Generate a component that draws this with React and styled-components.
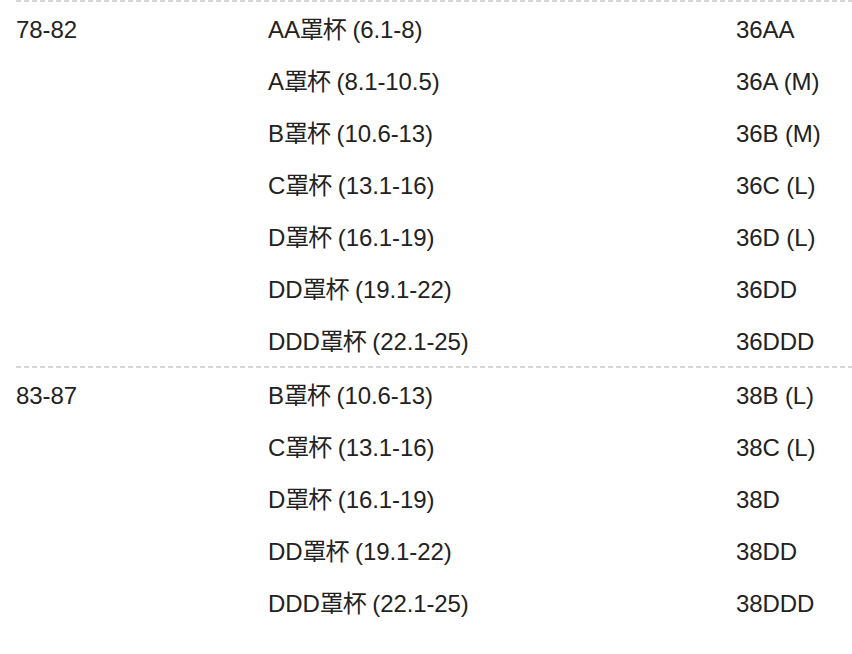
import React from 'react';
import styled, { createGlobalStyle } from 'styled-components';

const GlobalStyle = createGlobalStyle`
  html, body {
    margin: 0;
    padding: 0;
    background: #ffffff;
    overflow: hidden;
  }
  body {
    font-family: "Liberation Sans", "Noto Sans CJK SC", sans-serif;
    color: #222222;
  }
`;

const sizes = [
  {
    band: '78-82',
    rows: [
      ['AA罩杯 (6.1-8)', '36AA'],
      ['A罩杯 (8.1-10.5)', '36A (M)'],
      ['B罩杯 (10.6-13)', '36B (M)'],
      ['C罩杯 (13.1-16)', '36C (L)'],
      ['D罩杯 (16.1-19)', '36D (L)'],
      ['DD罩杯 (19.1-22)', '36DD'],
      ['DDD罩杯 (22.1-25)', '36DDD'],
    ],
  },
  {
    band: '83-87',
    rows: [
      ['B罩杯 (10.6-13)', '38B (L)'],
      ['C罩杯 (13.1-16)', '38C (L)'],
      ['D罩杯 (16.1-19)', '38D'],
      ['DD罩杯 (19.1-22)', '38DD'],
      ['DDD罩杯 (22.1-25)', '38DDD'],
    ],
  },
];

const Table = styled.div`
  margin-left: 16px;
  width: calc(100% - 16px);
`;

// dashed rule drawn as a gradient so the dash length matches
const Group = styled.div`
  display: grid;
  grid-template-columns: 252px 1fr;
  padding-top: 2px;
  background: repeating-linear-gradient(
      to right,
      #d6d6d6 0 5px,
      transparent 5px 8px
    )
    top left / 100% 2px no-repeat;
`;

const Band = styled.div`
  height: 52px;
  line-height: 52px;
  padding-top: 2px;
  box-sizing: border-box;
  font-size: 24px;
  letter-spacing: -0.1px;
`;

const Rows = styled.div`
  display: flex;
  flex-direction: column;
`;

const Row = styled.div`
  display: grid;
  grid-template-columns: 468px 1fr;
  height: 52px;
  line-height: 52px;
  padding-top: 2px;
  box-sizing: border-box;
  font-size: 24px;
  letter-spacing: -0.1px;
`;

const Cell = styled.span`
  white-space: nowrap;
`;

const Cup = styled.span`
  letter-spacing: -1px;
`;

export default function App() {
  return (
    <>
      <GlobalStyle />
      <Table>
        {sizes.map((g) => (
          <Group key={g.band}>
            <Band>{g.band}</Band>
            <Rows>
              {g.rows.map(([cup, size]) => {
                const [letters, rest] = cup.split('罩杯');
                return (
                  <Row key={size}>
                    <Cell>
                      {letters}
                      <Cup>罩杯</Cup>
                      {rest}
                    </Cell>
                    <Cell>{size}</Cell>
                  </Row>
                );
              })}
            </Rows>
          </Group>
        ))}
      </Table>
    </>
  );
}
